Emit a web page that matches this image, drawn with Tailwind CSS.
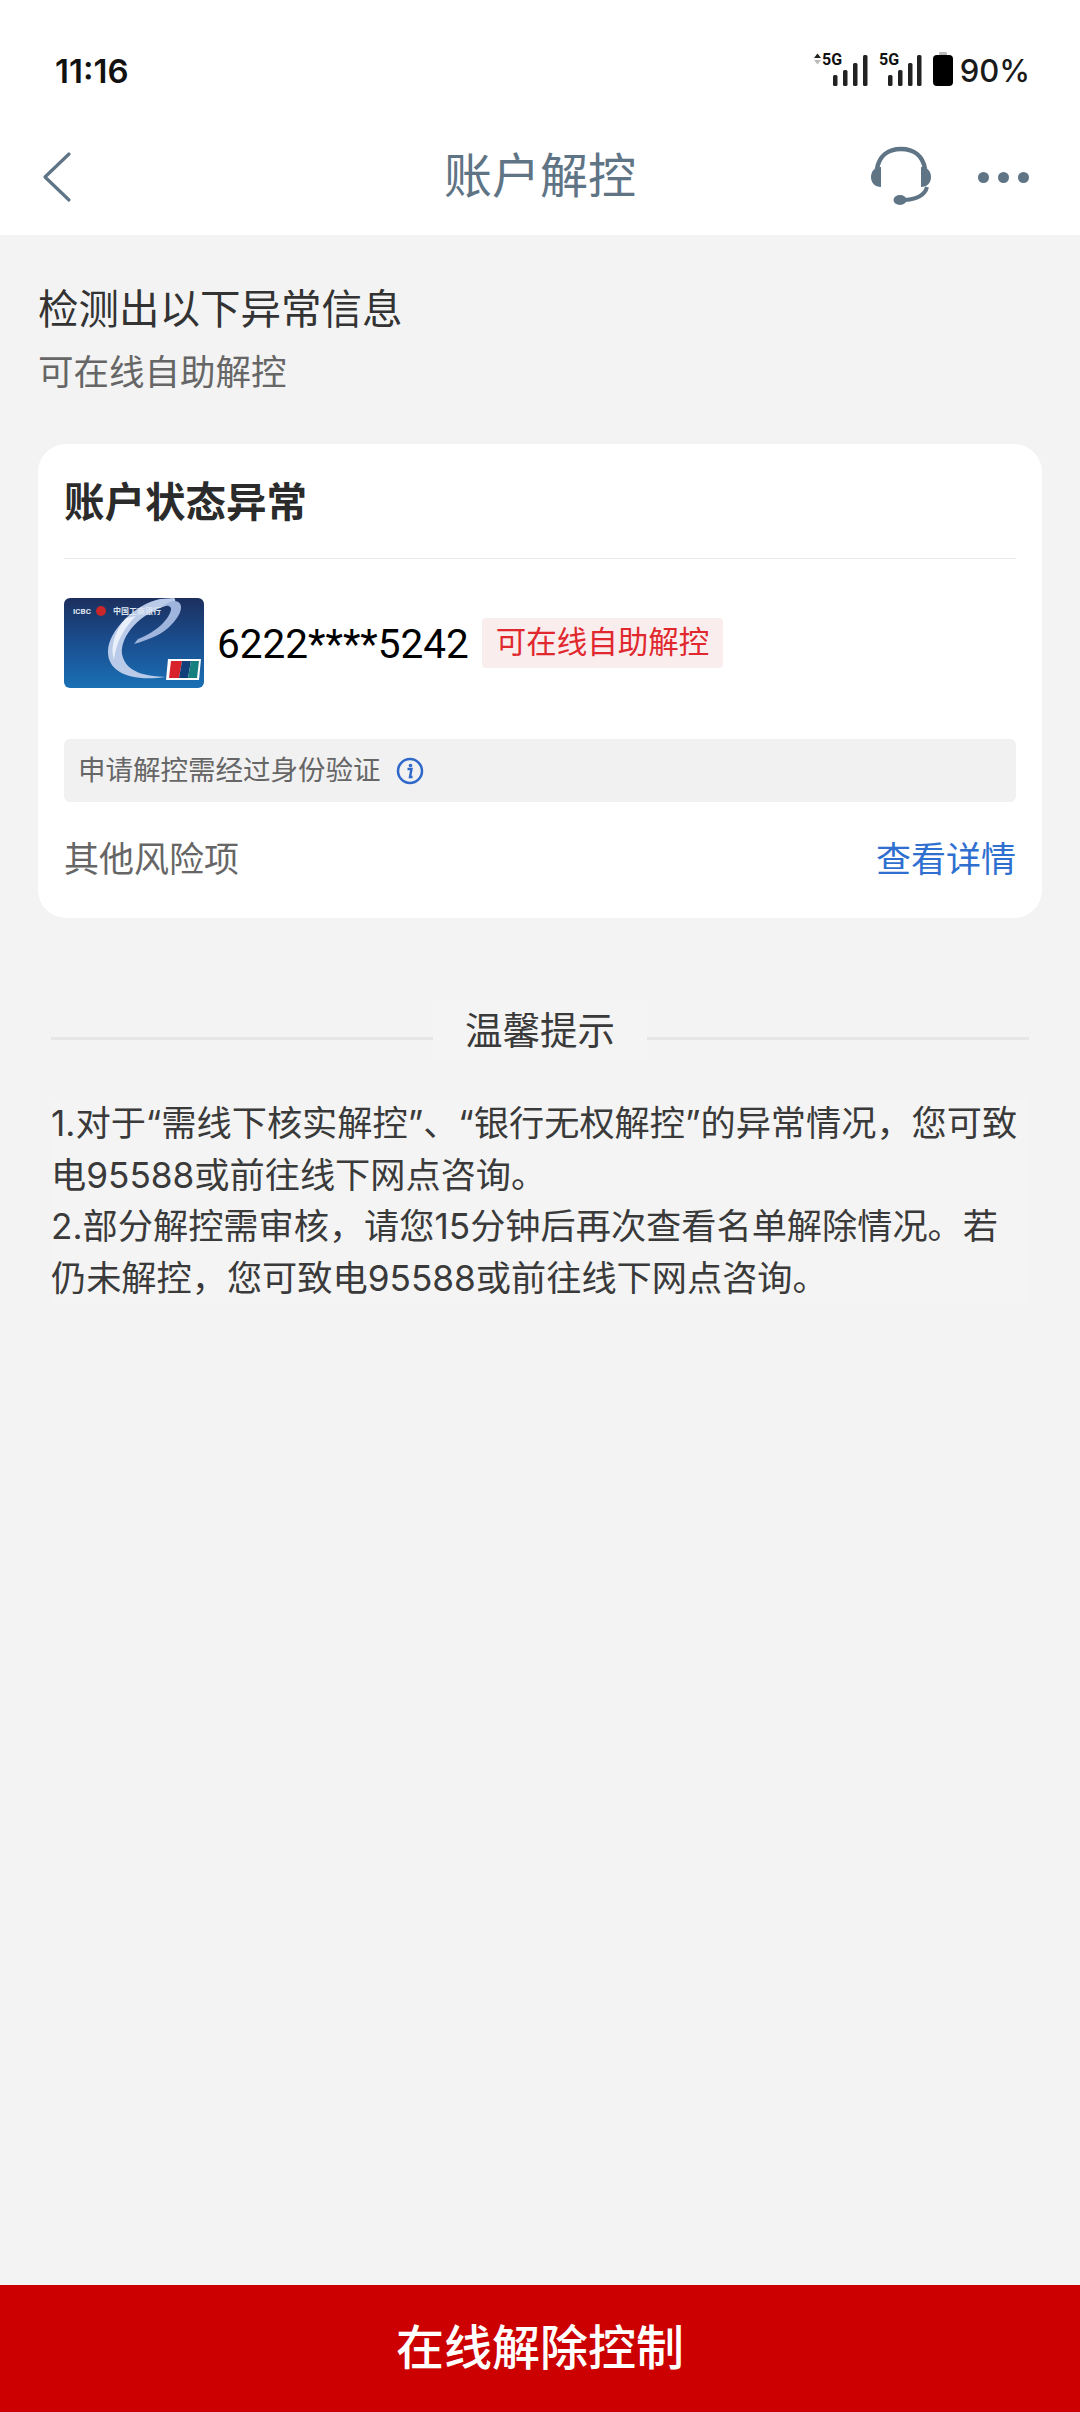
<!DOCTYPE html>
<html lang="zh-CN">
<head>
    <meta charset="UTF-8">
    <meta name="viewport" content="width=device-width, initial-scale=1.0">
    <title>账户解控</title>
    <script src="https://cdn.jsdelivr.net/npm/@tailwindcss/browser@4"></script>
</head>
<body class="bg-[#f3f3f3] font-['Roboto','Noto_Sans_CJK_SC',sans-serif]">
<div class="flex flex-col w-[1080px] h-[2412px] overflow-hidden">

    <!-- status bar -->
    <div class="bg-white h-[118px] shrink-0 flex items-start justify-between pl-[55px] pr-[50px] pt-[51px]">
        <span class="text-[33px] leading-[40px] font-semibold text-[#111] font-['Inter']">11:16</span>
        <div class="flex items-center h-[40px] gap-[10px]">
            <svg width="56" height="38" viewBox="0 0 56 38" class="mt-[-6px]">
                <path d="M1 9 L4.500 4.500 L8 9Z" fill="#222"/><path d="M1 11 L4.500 15.500 L8 11Z" fill="#bbb"/>
                <text x="9" y="16" font-family="Roboto" font-size="16" font-weight="700" fill="#111">5G</text>
                <rect x="20" y="26" width="4.500" height="11" rx="1.500" fill="#222"/>
                <rect x="30" y="21" width="4.500" height="16" rx="1.500" fill="#222"/>
                <rect x="40" y="14" width="4.500" height="23" rx="1.500" fill="#222"/>
                <rect x="50" y="6" width="4.500" height="31" rx="1.500" fill="#222"/>
            </svg>
            <svg width="44" height="38" viewBox="0 0 44 38" class="mt-[-6px]">
                <text x="0" y="16" font-family="Roboto" font-size="16" font-weight="700" fill="#111">5G</text>
                <rect x="9" y="26" width="4.500" height="11" rx="1.500" fill="#222"/>
                <rect x="19" y="21" width="4.500" height="16" rx="1.500" fill="#222"/>
                <rect x="29" y="14" width="4.500" height="23" rx="1.500" fill="#222"/>
                <rect x="38" y="6" width="4.500" height="31" rx="1.500" fill="#222"/>
            </svg>
            <svg width="20" height="34" viewBox="0 0 20 34" class="mt-[-4px]">
                <rect x="6" y="0" width="8" height="4" rx="1" fill="#bbb"/>
                <rect x="0" y="3" width="20" height="31" rx="4" fill="#000"/>
            </svg>
            <span class="text-[31px] leading-[40px] font-medium text-[#1a1a1a] font-['Inter'] ml-[-3px]">90%</span>
        </div>
    </div>

    <!-- nav bar -->
    <div class="bg-white h-[117px] shrink-0 relative flex items-center justify-center">
        <svg width="30" height="52" viewBox="0 0 30 52" class="absolute left-[42px] top-[33px]">
            <path d="M27 3 L3 26 L27 49" fill="none" stroke="#5f7485" stroke-width="3.200" stroke-linejoin="round" stroke-linecap="round"/>
        </svg>
        <span class="text-[48px] leading-[60px] text-[#5f7485]">账户解控</span>
        <svg width="64" height="62" viewBox="0 0 64 62" class="absolute left-[869px] top-[27px]">
            <path d="M8 24 C10 11 19 4 32 4 C45 4 54 11 56 24" fill="none" stroke="#5f7485" stroke-width="4.500"/>
            <path d="M58 42 C56 50 48 54 36 55" fill="none" stroke="#5f7485" stroke-width="4"/>
            <path d="M12 22 V42 C6 42 2 38 2 32 C2 26 6 22 12 22Z" fill="#5f7485"/>
            <path d="M52 22 V42 C58 42 62 38 62 32 C62 26 58 22 52 22Z" fill="#5f7485"/>
            <ellipse cx="31" cy="55" rx="6.500" ry="5" fill="#5f7485"/>
        </svg>
        <div class="absolute left-[978px] top-[54px] flex gap-[9px]">
            <span class="w-[11px] h-[11px] rounded-full bg-[#5f7485]"></span>
            <span class="w-[11px] h-[11px] rounded-full bg-[#5f7485]"></span>
            <span class="w-[11px] h-[11px] rounded-full bg-[#5f7485]"></span>
        </div>
    </div>

    <!-- intro -->
    <div class="pl-[38px] pt-[47px] shrink-0">
        <p class="text-[40.500px] leading-[56px] text-[#333]">检测出以下异常信息</p>
        <p class="text-[35.500px] leading-[50px] mt-[10px] text-[#666]">可在线自助解控</p>
    </div>

    <!-- card -->
    <div class="mx-[38px] mt-[46px] h-[474px] shrink-0 bg-white rounded-[28px] px-[26px]">
        <div class="h-[115px] border-b border-[#e8e8e8] flex items-center">
            <span class="text-[40.500px] font-bold text-[#2b2b2b] mt-[4px]">账户状态异常</span>
        </div>
        <div class="flex items-center mt-[39px] h-[90px]">
            <svg width="140" height="90" viewBox="0 0 140 90" class="rounded-[6px] shrink-0">
                <defs>
                    <linearGradient id="cardBg" x1="0" y1="0" x2="0" y2="1">
                        <stop offset="0" stop-color="#1c2f5e"/>
                        <stop offset="0.5" stop-color="#1a4f90"/>
                        <stop offset="1" stop-color="#1a70b5"/>
                    </linearGradient>
                </defs>
                <rect width="140" height="90" fill="url(#cardBg)"/>
                <path d="M96 1 C72 6 44 32 44 54 C44 74 66 84 102 79 C84 78 62 76 58 56 C56 38 76 14 108 6 C112 4 112 2 110 0Z" fill="#b9cbe9"/>
                <path d="M108 3 C122 2 118 16 108 26 C100 36 84 42 70 46 L74 41 C88 36 104 24 107 12 C108 8 102 6 96 9Z" fill="#9fb5dd"/>
                <path d="M62 20 C50 34 46 50 50 62 C52 44 60 30 72 18Z" fill="#fff" fill-opacity="0.7"/>
                <circle cx="37" cy="13" r="5" fill="#c8282a"/>
                <text x="9" y="16" font-family="Roboto" font-size="8" font-weight="700" fill="#dfe6f2">ICBC</text>
                <text x="49" y="16" font-size="8" font-weight="700" fill="#dfe6f2">中国工商银行</text>
                <path d="M104 61 H137 L135 82 H102Z" fill="#fff"/>
                <path d="M107 63 H118 L115 80 H105Z" fill="#d8232a"/>
                <path d="M118 63 H127 L124 80 H115Z" fill="#123f7a"/>
                <path d="M127 63 H135 L133 80 H124Z" fill="#16807f"/>
            </svg>
            <span class="ml-[13px] text-[40.500px] leading-[48px] text-black mt-[2px]">6222****5242</span>
            <span class="ml-[13px] h-[50px] px-[14px] flex items-center rounded-[4px] bg-[#f9eded] text-[30.500px] text-[#e0282e]">可在线自助解控</span>
        </div>
        <div class="mt-[51px] h-[63px] rounded-[6px] bg-[#f1f1f1] flex items-center pl-[14px]">
            <span class="text-[27.500px] text-[#666]">申请解控需经过身份验证</span>
            <svg width="28" height="28" viewBox="0 0 28 28" class="ml-[15px]">
                <circle cx="14" cy="14" r="12" fill="none" stroke="#2f68c9" stroke-width="2.500"/>
                <circle cx="14.500" cy="8.500" r="1.800" fill="#2f68c9"/>
                <path d="M11.500 12 H15.500 L14 20 H16.500" fill="none" stroke="#2f68c9" stroke-width="2.400"/>
            </svg>
        </div>
        <div class="flex justify-between items-center h-[56px] mt-[31px]">
            <span class="text-[35px] text-[#666]">其他风险项</span>
            <span class="text-[35px] text-[#2f6fd0]">查看详情</span>
        </div>
    </div>

    <!-- tips heading -->
    <div class="flex items-center mx-[51px] mt-[83px] h-[60px] shrink-0">
        <div class="flex-1 h-[3px] bg-[#e6e6e6] mt-[14px]"></div>
        <div class="w-[214px] text-center text-[37.500px] leading-[60px] text-[#3a3a3a] bg-[#f4f4f4]">温馨提示</div>
        <div class="flex-1 h-[3px] bg-[#e6e6e6] mt-[14px]"></div>
    </div>

    <!-- tips text -->
    <div class="mx-[51px] mt-[37px] pr-[8px] text-[35.200px] leading-[51.500px] text-[#3a3a3a] bg-[#f4f4f4] shrink-0 font-['Inter','Noto_Sans_CJK_SC',sans-serif]">
        <p>1.对于“需线下核实解控”、“银行无权解控”的异常情况，您可致电95588或前往线下网点咨询。</p>
        <p>2.部分解控需审核，请您15分钟后再次查看名单解除情况。若仍未解控，您可致电95588或前往线下网点咨询。</p>
    </div>

    <!-- bottom button -->
    <button class="mt-auto h-[127px] shrink-0 bg-[#cc0000] text-white text-[48px] font-medium">在线解除控制</button>
</div>
</body>
</html>
